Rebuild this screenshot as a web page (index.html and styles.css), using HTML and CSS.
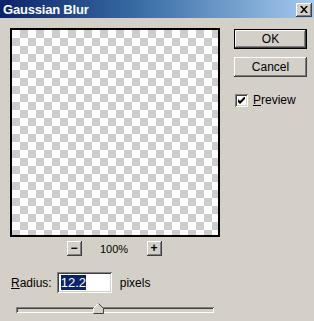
FILE: index.html
```html
<!DOCTYPE html>
<html lang="en">
<head>
  <meta charset="UTF-8">
  <title>Gaussian Blur</title>
  <link rel="stylesheet" href="styles.css">
</head>
<body>
  <div class="dialog">
    <div class="titlebar">
      <span class="title">Gaussian Blur</span>
      <button class="close-btn">
        <svg width="8" height="7" viewBox="0 0 8 7"><path d="M0 0h2l2 2.5 2-2.5h2l-3 3.5 3 3.5h-2l-2-2.5-2 2.5h-2l3-3.5z" fill="#000"/></svg>
      </button>
    </div>
    <div class="content">
      <div class="left-col">
        <div class="preview-box"></div>
        <div class="zoom-row">
          <button class="win-btn small">−</button>
          <span class="zoom-text">100%</span>
          <button class="win-btn small">+</button>
        </div>
        <div class="radius-row">
          <span class="label"><u>R</u>adius:</span>
          <div class="field"><span class="selected">12.2</span></div>
          <span class="label">pixels</span>
        </div>
        <div class="slider">
          <div class="track"></div>
          <svg class="thumb" width="11" height="11" viewBox="0 0 11 11">
            <path d="M0.5 10.5V5.5L5.5 0.5L10.5 5.5V10.5Z" fill="#d4d0c8"/>
            <path d="M0.5 10V5.5L5.5 0.5" stroke="#fff" fill="none"/>
            <path d="M5.5 0.5L10.5 5.5V10.5H0.5" stroke="#404040" fill="none"/>
          </svg>
        </div>
      </div>
      <div class="right-col">
        <button class="win-btn default">OK</button>
        <button class="win-btn">Cancel</button>
        <label class="check-row">
          <span class="checkbox">
            <svg width="7" height="7" viewBox="0 0 7 7"><path d="M0 2v3l2 2 5-5v-3l-5 5z" fill="#000"/></svg>
          </span>
          <span><u>P</u>review</span>
        </label>
      </div>
    </div>
  </div>
</body>
</html>
```

FILE: styles.css
```css
html, body {
  margin: 0;
  padding: 0;
}
body {
  width: 314px;
  height: 321px;
  background: #d4d0c8;
  font-family: "Liberation Sans", Arial, sans-serif;
  font-size: 11px;
  color: #000;
  overflow: hidden;
}
.dialog {
  width: 314px;
  height: 321px;
}
.titlebar {
  height: 18px;
  background: linear-gradient(to right, #0a246a, #3a6ea5 45%, #a6caf0);
  display: flex;
  align-items: center;
  justify-content: space-between;
  padding: 0 2px 0 3px;
}
.title {
  color: #fff;
  font-weight: bold;
  font-size: 13px;
  letter-spacing: -0.2px;
}
.close-btn {
  width: 16px;
  height: 14px;
  padding: 0;
  border: none;
  background: #d4d0c8;
  box-shadow: inset -1px -1px #404040, inset 1px 1px #fff, inset -2px -2px #808080, inset 2px 2px #d4d0c8;
  display: flex;
  align-items: center;
  justify-content: center;
  margin-top: 1px;
}
.content {
  display: flex;
}
.left-col {
  padding-left: 10px;
  width: 210px;
}
.preview-box {
  margin-top: 10px;
  box-sizing: border-box;
  width: 210px;
  height: 209px;
  border: 2px solid #000;
  background: conic-gradient(#ccc 0 25%, #fff 0 50%, #ccc 0 75%, #fff 0);
  background-size: 16px 16px;
}
.zoom-row {
  display: flex;
  justify-content: center;
  align-items: center;
  margin-top: 4px;
  padding-right: 2px;
}
.zoom-text {
  width: 65px;
  text-align: center;
  font-size: 11px;
}
.win-btn {
  font-family: "Liberation Sans", Arial, sans-serif;
  font-size: 12px;
  color: #000;
  background: #d4d0c8;
  border: none;
  padding: 0;
  width: 73px;
  height: 20px;
  box-shadow: inset -1px -1px #404040, inset 1px 1px #fff, inset -2px -2px #808080, inset 2px 2px #d4d0c8;
}
.win-btn.default {
  box-shadow: inset 0 0 0 1px #000, inset -2px -2px #404040, inset 2px 2px #fff, inset -3px -3px #808080;
}
.win-btn.small {
  width: 15px;
  height: 15px;
  font-size: 12px;
  font-weight: bold;
  line-height: 13px;
}
.radius-row {
  display: flex;
  align-items: center;
  margin-top: 16px;
  padding-left: 1px;
}
.label {
  font-size: 12px;
}
.field {
  box-sizing: border-box;
  width: 55px;
  height: 21px;
  margin: 0 8px 0 5px;
  background: #fff;
  box-shadow: inset 1px 1px #808080, inset -1px -1px #fff, inset 2px 2px #404040, inset -2px -2px #d4d0c8;
  padding: 3px 0 0 4px;
}
.selected {
  background: #0a246a;
  color: #fff;
  font-size: 13px;
  line-height: 15px;
  display: inline-block;
}
.slider {
  position: relative;
  margin: 10px 0 0 6px;
  width: 198px;
  height: 12px;
}
.track {
  position: absolute;
  left: 0;
  right: 0;
  top: 4px;
  height: 6px;
  box-sizing: border-box;
  background: #d4d0c8;
  box-shadow: inset 1px 1px #808080, inset -1px -1px #fff, inset 2px 2px #404040, inset -2px -2px #d4d0c8;
}
.thumb {
  position: absolute;
  left: 77px;
  top: 0;
}
.right-col {
  margin-left: 14px;
  padding-top: 11px;
  display: flex;
  flex-direction: column;
  gap: 8px;
}
.check-row {
  display: flex;
  align-items: center;
  gap: 5px;
  margin-top: 8px;
  margin-left: 1px;
  font-size: 12px;
}
.checkbox {
  box-sizing: border-box;
  width: 13px;
  height: 13px;
  background: #fff;
  box-shadow: inset 1px 1px #808080, inset -1px -1px #fff, inset 2px 2px #404040, inset -2px -2px #d4d0c8;
  display: flex;
  align-items: center;
  justify-content: center;
}
```
